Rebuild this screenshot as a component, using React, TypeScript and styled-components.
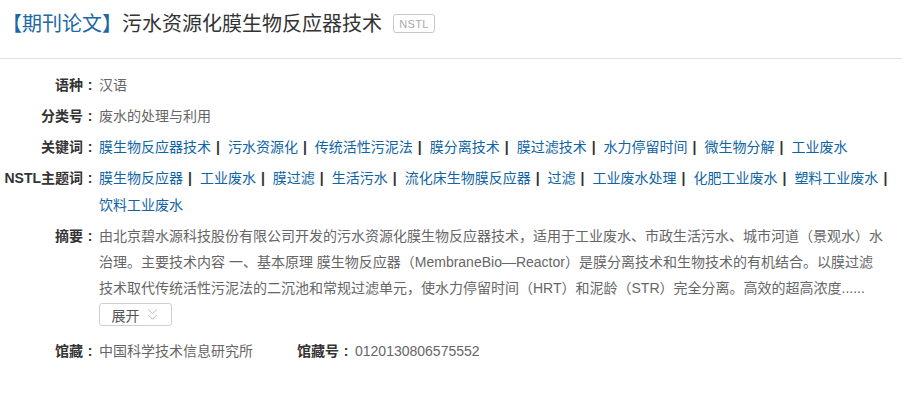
import React from 'react';
import styled, { createGlobalStyle } from 'styled-components';
import { ChevronsDown } from 'lucide-react';

const GlobalStyle = createGlobalStyle`
  html, body {
    margin: 0;
    padding: 0;
    background: #fff;
  }
  body {
    font-family: "Liberation Sans", "Noto Sans CJK SC", sans-serif;
    color: #333;
  }
`;

const Page = styled.div`
  width: 906px;
  padding: 0 4px 0 0;
  box-sizing: border-box;
`;

const Header = styled.div`
  display: flex;
  align-items: center;
  height: 59px;
  padding: 0 0 11px 2px;
  border-bottom: 1px solid #e2e2e2;
  box-sizing: border-box;
`;

const Title = styled.h1`
  margin: 0;
  font-size: 20px;
  font-weight: normal;
  line-height: 28px;
  color: #333;
`;

const TypeTag = styled.span`
  color: #1a68a5;
`;

const Badge = styled.span`
  display: inline-flex;
  align-items: center;
  justify-content: center;
  margin-left: 11px;
  width: 42px;
  height: 19px;
  box-sizing: border-box;
  border: 1px solid #c8c8c8;
  border-radius: 3px;
  font-size: 11px;
  color: #aaa;
  letter-spacing: 0.3px;
`;

const Body = styled.div`
  padding-top: 13px;
`;

const Row = styled.div`
  display: flex;
  align-items: flex-start;
  font-size: 14px;
  line-height: 27px;
  margin-bottom: 4px;
`;

const Label = styled.div`
  flex: 0 0 97px;
  text-align: right;
  font-weight: bold;
  color: #333;
  white-space: nowrap;
`;

const Colon = styled.span`
  display: inline-block;
  width: 14px;
  text-align: center;
  font-weight: bold;
`;

const Value = styled.div<{ $width?: number }>`
  margin-left: 2px;
  color: #666;
  ${({ $width }) => ($width ? `width: ${$width}px;` : 'flex: 1;')}
`;

const Term = styled.span`
  white-space: nowrap;
`;

const Link = styled.a`
  color: #0f64a3;
  text-decoration: none;
`;

const Sep = styled.span`
  display: inline-block;
  margin: 0 8px 0 5px;
  font-weight: bold;
  color: #333;
`;

const Abstract = styled.div`
  width: 786px;
  margin-left: 2px;
  color: #666;
  font-size: 14px;
  line-height: 26px;
`;

const ExpandButton = styled.button`
  display: flex;
  align-items: center;
  justify-content: center;
  gap: 3px;
  width: 73px;
  height: 23px;
  margin-top: 2px;
  margin-left: 2px;
  padding: 0 0 0 2px;
  border: 1px solid #cfcfcf;
  border-radius: 3px;
  background: #fff;
  color: #555;
  font-family: inherit;
  font-size: 14px;
  cursor: pointer;
  svg {
    color: #a8a8a8;
  }
`;

const BottomRow = styled(Row)`
  margin-top: 12px;
`;

const PairLabel = styled.div`
  font-weight: bold;
  color: #333;
  white-space: nowrap;
`;

const keywords = ['膜生物反应器技术', '污水资源化', '传统活性污泥法', '膜分离技术', '膜过滤技术', '水力停留时间', '微生物分解', '工业废水'];
const subjects = ['膜生物反应器', '工业废水', '膜过滤', '生活污水', '流化床生物膜反应器', '过滤', '工业废水处理', '化肥工业废水', '塑料工业废水', '饮料工业废水'];

function TermList({ items }: { items: string[] }) {
  return (
    <>
      {items.map((k, i) => (
        <Term key={k + i}>
          <Link href="#">{k}</Link>
          {i < items.length - 1 && <Sep>|</Sep>}
        </Term>
      ))}
    </>
  );
}

function FieldLabel({ text }: { text: string }) {
  return (
    <>
      {text}
      <Colon>:</Colon>
    </>
  );
}

export default function App() {
  return (
    <Page>
      <GlobalStyle />
      <Header>
        <Title>
          <TypeTag>【期刊论文】</TypeTag>污水资源化膜生物反应器技术
        </Title>
        <Badge>NSTL</Badge>
      </Header>
      <Body>
        <Row>
          <Label><FieldLabel text="语种" /></Label>
          <Value>汉语</Value>
        </Row>
        <Row>
          <Label><FieldLabel text="分类号" /></Label>
          <Value>废水的处理与利用</Value>
        </Row>
        <Row>
          <Label><FieldLabel text="关键词" /></Label>
          <Value>
            <TermList items={keywords} />
          </Value>
        </Row>
        <Row>
          <Label><FieldLabel text="NSTL主题词" /></Label>
          <Value $width={800}>
            <TermList items={subjects} />
          </Value>
        </Row>
        <Row>
          <Label><FieldLabel text="摘要" /></Label>
          <div>
            <Abstract>
              由北京碧水源科技股份有限公司开发的污水资源化膜生物反应器技术，适用于工业废水、市政生活污水、城市河道（景观水）水治理。主要技术内容 一、基本原理 膜生物反应器（MembraneBio—Reactor）是膜分离技术和生物技术的有机结合。以膜过滤技术取代传统活性污泥法的二沉池和常规过滤单元，使水力停留时间（HRT）和泥龄（STR）完全分离。高效的超高浓度......
            </Abstract>
            <ExpandButton>
              展开
              <ChevronsDown size={19} strokeWidth={1} />
            </ExpandButton>
          </div>
        </Row>
        <BottomRow>
          <Label><FieldLabel text="馆藏" /></Label>
          <Value $width={198}>中国科学技术信息研究所</Value>
          <PairLabel><FieldLabel text="馆藏号" /></PairLabel>
          <Value>0120130806575552</Value>
        </BottomRow>
      </Body>
    </Page>
  );
}
